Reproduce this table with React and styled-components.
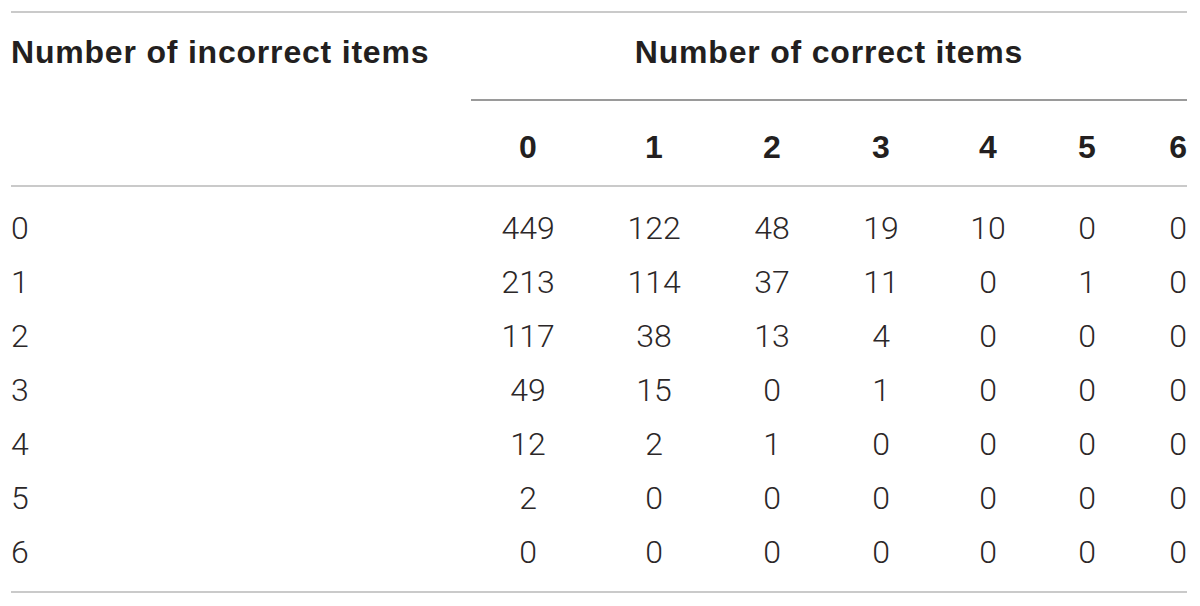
import React from "react";
import styled, { createGlobalStyle } from "styled-components";

const rows = [
  ["0", 449, 122, 48, 19, 10, 0, 0],
  ["1", 213, 114, 37, 11, 0, 1, 0],
  ["2", 117, 38, 13, 4, 0, 0, 0],
  ["3", 49, 15, 0, 1, 0, 0, 0],
  ["4", 12, 2, 1, 0, 0, 0, 0],
  ["5", 2, 0, 0, 0, 0, 0, 0],
  ["6", 0, 0, 0, 0, 0, 0, 0],
];

const counts = [0, 1, 2, 3, 4, 5, 6];

const GlobalStyle = createGlobalStyle`
  body {
    margin: 0;
    background: #ffffff;
  }
`;

const columns = "460px 114px 138px 98px 120px 94px 104px 48px";

const Page = styled.div`
  padding: 11px 13px 0 11px;
  color: #231f20;
`;

const Table = styled.div`
  display: flex;
  flex-direction: column;
  border-top: 2px solid #cacaca;
  border-bottom: 2px solid #cacaca;
`;

const Head = styled.div`
  display: grid;
  grid-template-columns: ${columns};
  font-family: "Liberation Sans", Arial, sans-serif;
  font-weight: 700;
  font-size: 32px;
  line-height: 36px;
`;

const LabelHead = styled.div`
  grid-row: span 2;
  padding-top: 21px;
  letter-spacing: 0.8px;
  border-bottom: 2px solid #cacaca;
`;

const GroupHead = styled.div`
  grid-column: span 7;
  padding: 21px 0 29px;
  text-align: center;
  letter-spacing: 0.8px;
  border-bottom: 2px solid #9a9a9a;
`;

const ColHead = styled.div`
  padding: 28px 0 20px;
  text-align: ${(p) => (p.$last ? "right" : "center")};
  border-bottom: 2px solid #cacaca;
`;

const Body = styled.div`
  display: grid;
  grid-template-columns: ${columns};
  padding: 14px 0 12px;
  font-family: Roboto, "Liberation Sans", sans-serif;
  font-weight: 300;
  font-size: 32px;
  line-height: 54px;
  color: #2b2728;
`;

const Cell = styled.div`
  height: 54px;
  text-align: ${(p) => p.$align};
`;

export default function App() {
  return (
    <Page>
      <GlobalStyle />
      <Table>
        <Head>
          <LabelHead>Number of incorrect items</LabelHead>
          <GroupHead>Number of correct items</GroupHead>
          {counts.map((c) => (
            <ColHead key={c} $last={c === 6}>
              {c}
            </ColHead>
          ))}
        </Head>
        <Body>
          {rows.map((row) =>
            row.map((v, i) => (
              <Cell
                key={row[0] + "-" + i}
                $align={i === 0 ? "left" : i === 7 ? "right" : "center"}
              >
                {v}
              </Cell>
            ))
          )}
        </Body>
      </Table>
    </Page>
  );
}
